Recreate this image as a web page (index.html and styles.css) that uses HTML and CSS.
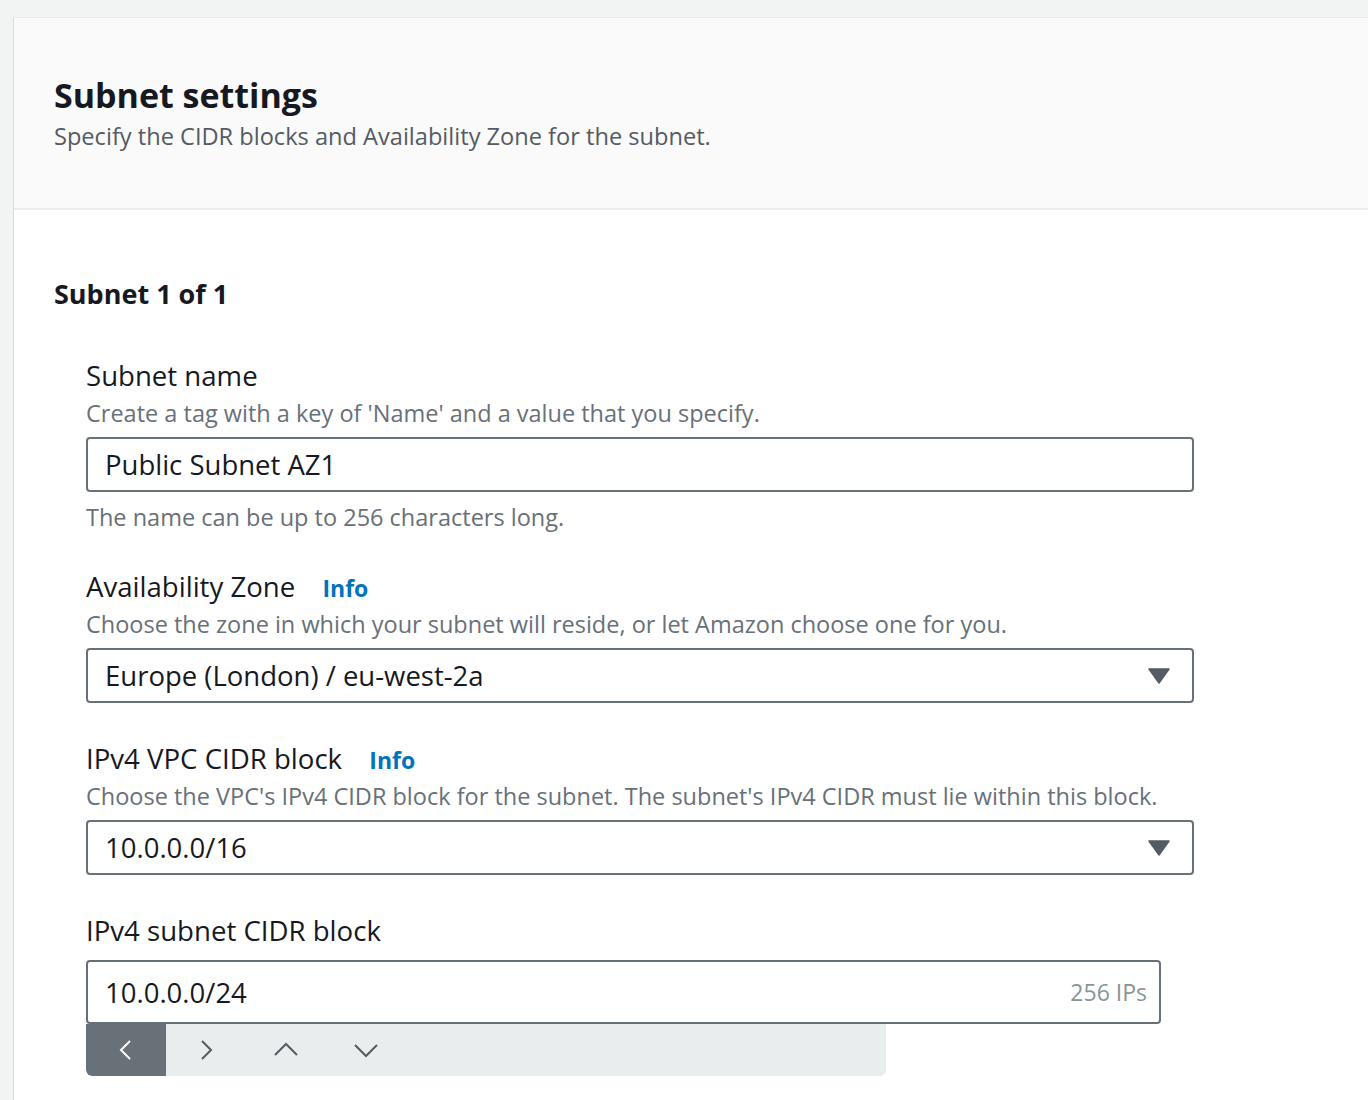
FILE: index.html
```html
<!DOCTYPE html>
<html>
<head>
<meta charset="utf-8">
<link rel="stylesheet" href="styles.css">
</head>
<body>
<div class="page">
  <div class="container">
    <div class="header">
      <h2 class="title">Subnet settings</h2>
      <p class="subtitle">Specify the CIDR blocks and Availability Zone for the subnet.</p>
    </div>
    <div class="body">
      <h3 class="subnet-title">Subnet 1 of 1</h3>
      <div class="fields">
        <div class="field">
          <div class="label">Subnet name</div>
          <div class="desc">Create a tag with a key of 'Name' and a value that you specify.</div>
          <div class="input">Public Subnet AZ1</div>
          <div class="constraint">The name can be up to 256 characters long.</div>
        </div>
        <div class="field">
          <div class="label">Availability Zone <a class="info">Info</a></div>
          <div class="desc">Choose the zone in which your subnet will reside, or let Amazon choose one for you.</div>
          <div class="input select"><span>Europe (London) / eu-west-2a</span>
            <svg class="caret" width="22" height="16" viewBox="0 0 22 16"><path d="M1 1 H21 L11 15 Z" fill="#545b64" stroke="#545b64" stroke-width="1.5" stroke-linejoin="round"/></svg>
          </div>
        </div>
        <div class="field">
          <div class="label">IPv4 VPC CIDR block <a class="info">Info</a></div>
          <div class="desc">Choose the VPC's IPv4 CIDR block for the subnet. The subnet's IPv4 CIDR must lie within this block.</div>
          <div class="input select"><span>10.0.0.0/16</span>
            <svg class="caret" width="22" height="16" viewBox="0 0 22 16"><path d="M1 1 H21 L11 15 Z" fill="#545b64" stroke="#545b64" stroke-width="1.5" stroke-linejoin="round"/></svg>
          </div>
        </div>
        <div class="field last">
          <div class="label label-gap">IPv4 subnet CIDR block</div>
          <div class="cidr">
            <div class="input cidr-input"><span>10.0.0.0/24</span><span class="ips">256 IPs</span></div>
            <div class="toolbar">
              <button class="tb active"><svg width="20" height="22" viewBox="0 0 20 22"><path d="M14 2 L5 11 L14 20" fill="none" stroke="#fff" stroke-width="2"/></svg></button>
              <button class="tb"><svg width="20" height="22" viewBox="0 0 20 22"><path d="M6 2 L15 11 L6 20" fill="none" stroke="#545b64" stroke-width="2"/></svg></button>
              <button class="tb"><svg width="26" height="20" viewBox="0 0 26 20"><path d="M2 15 L13 4 L24 15" fill="none" stroke="#545b64" stroke-width="2"/></svg></button>
              <button class="tb"><svg width="26" height="20" viewBox="0 0 26 20"><path d="M2 5 L13 16 L24 5" fill="none" stroke="#545b64" stroke-width="2"/></svg></button>
            </div>
          </div>
        </div>
      </div>
    </div>
  </div>
</div>
</body>
</html>
```

FILE: styles.css
```css
* { box-sizing: border-box; }
html, body { margin: 0; padding: 0; }
body {
  background: #f2f3f3;
  font-family: "Open Sans", "Noto Sans", Arial, sans-serif;
  color: #16191f;
  overflow: hidden;
  height: 1100px;
}
.page {
  padding: 17px 0 0 13px;
}
.container {
  background: #fff;
  border-left: 1px solid #d5dbdb;
  border-top: 1px solid #eaeded;
  width: 1400px;
  min-height: 1100px;
}
.header {
  background: #fafafa;
  border-bottom: 2px solid #eaeded;
  padding: 55px 40px 0;
  height: 192px;
}
.title {
  margin: 0;
  font-size: 34px;
  font-weight: 700;
  line-height: 44px;
  color: #16191f;
}
.subtitle {
  margin: 3px 0 0;
  font-size: 23.6px;
  line-height: 32px;
  color: #545b64;
}
.body {
  padding: 66px 40px 0;
}
.subnet-title {
  margin: 0;
  font-size: 27px;
  font-weight: 700;
  line-height: 36px;
}
.fields {
  padding: 44px 0 0 32px;
  width: 1140px;
}
.field { margin-bottom: 36px; }
.label {
  font-size: 27.6px;
  line-height: 38px;
  height: 38px;
  color: #16191f;
}
.info {
  color: #0073bb;
  font-weight: 700;
  font-size: 23px;
  line-height: 1;
  margin-left: 20px;
}
.desc {
  font-size: 23.5px;
  line-height: 38px;
  color: #687078;
  margin-bottom: 5px;
}
.input {
  width: 1108px;
  height: 55px;
  border: 2px solid #687078;
  border-radius: 4px;
  padding: 0 17px;
  display: flex;
  align-items: center;
  font-size: 27.5px;
  color: #16191f;
  background: #fff;
}
.select { justify-content: space-between; padding-right: 22px; }
.caret { display: block; }
.constraint {
  font-size: 23.5px;
  line-height: 30px;
  margin-top: 10px;
  margin-bottom: -1px;
  color: #687078;
}
.label-gap { margin-bottom: 11px; }
.cidr-input {
  width: 1075px;
  height: 64px;
  justify-content: space-between;
  padding-right: 12px;
}
.ips {
  font-size: 23px;
  color: #879596;
}
.toolbar {
  width: 800px;
  height: 52px;
  background: #eaeded;
  border-radius: 0 0 6px 6px;
  display: flex;
  overflow: hidden;
}
.tb {
  width: 80px;
  height: 52px;
  border: 0;
  background: transparent;
  display: flex;
  align-items: center;
  justify-content: center;
  padding: 0;
}
.tb.active { background: #687078; border-bottom-left-radius: 6px; }
```
